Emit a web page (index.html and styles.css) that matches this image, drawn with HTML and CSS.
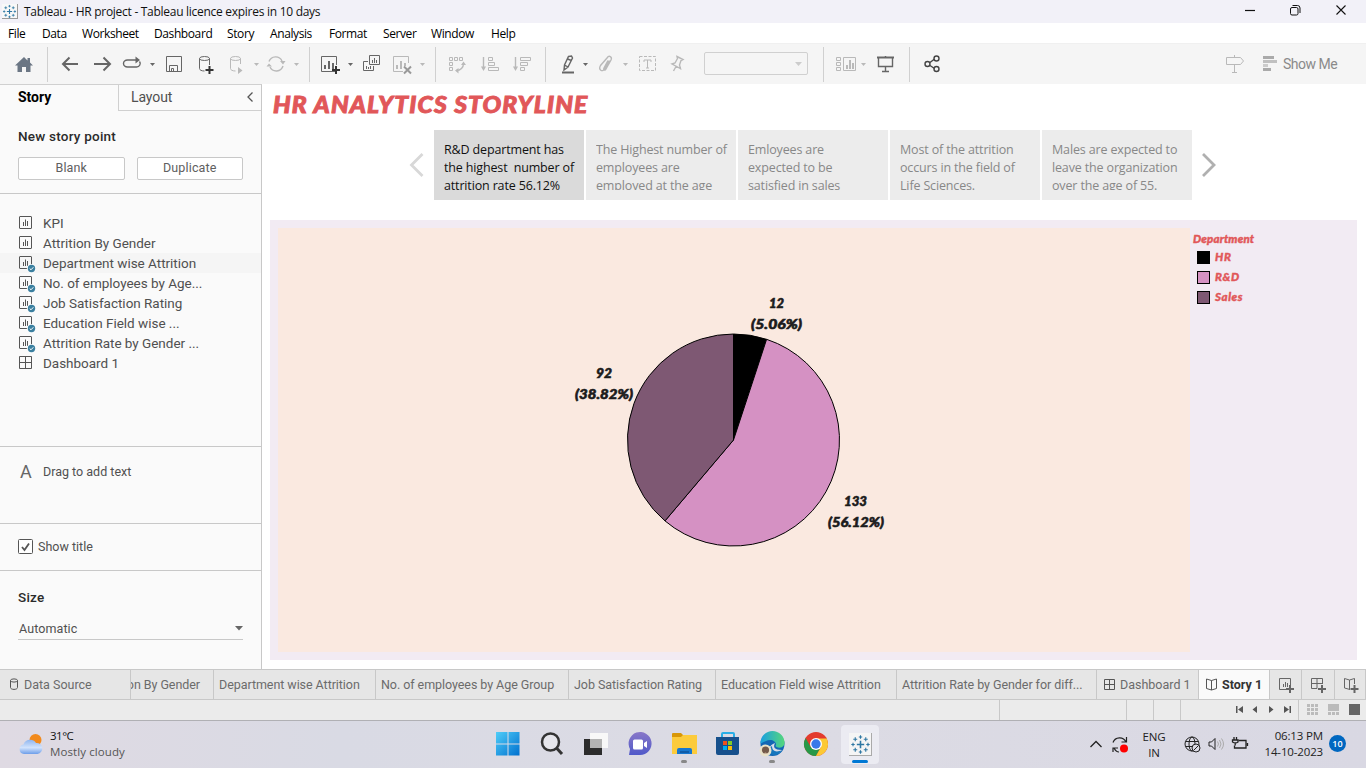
FILE: index.html
```html
<!DOCTYPE html>
<html lang="en">
<head>
<meta charset="utf-8">
<title>Tableau - HR project</title>
<link rel="stylesheet" href="styles.css">
</head>
<body>
<svg class="defs" width="0" height="0">
  <defs>
    <symbol id="caret" viewBox="0 0 8 20"><path d="M2 9h5l-2.500 3z" fill="currentColor"/></symbol>
    <symbol id="sheet" viewBox="0 0 18 18"><g fill="none" stroke="currentColor"><rect x="1.500" y="1.500" width="12" height="12" rx=".5"/><path d="M5.500 7v4M7.500 4.500V11M9.500 6v5"/></g></symbol>
    <symbol id="sheetok" viewBox="0 0 18 18"><use href="#sheet" width="18" height="18"/><circle cx="13.500" cy="13.500" r="4.600" fill="#fafafa"/><circle cx="13.500" cy="13.500" r="3.700" fill="#3a7f9f"/><path d="M11.700 13.500l1.300 1.300 2.300-2.500" fill="none" stroke="#fff"/></symbol>
    <symbol id="grid" viewBox="0 0 18 18"><path d="M1.500 1.500h12v12h-12zM7.500 1.500v12M1.500 7.500h12" fill="none" stroke="currentColor"/></symbol>
    <symbol id="tabgrid" viewBox="0 0 15 15"><path d="M1.500 1.500h10v10h-10zM6.500 1.500v10M1.500 6.500h10" fill="none" stroke="currentColor"/></symbol>
    <symbol id="tableau" viewBox="0 0 16 16"><g fill="none" stroke="#2f77a3"><path d="M8 5.200v5.600M5.200 8h5.600" stroke-width="1.200"/><path d="M4 2.500v3M2.500 4h3M12 2.500v3M10.500 4h3M4 10.500v3M2.500 12h3M12 10.500v3M10.500 12h3M8 1v2.600M6.700 2.300h2.600M8 12.400V15M6.700 13.700h2.600M2.300 6.700v2.600M1 8h2.600M13.700 6.700v2.600M12.400 8H15" stroke-width=".85"/></g></symbol>
  </defs>
</svg>

<header class="titlebar">
  <span class="app-icon"><svg width="15" height="15"><use href="#tableau"/></svg></span>
  <span class="app-title">Tableau - HR project - Tableau licence expires in 10 days</span>
  <svg class="window-controls" width="106" height="23" fill="none" stroke="#111">
    <path d="M1 10.500h10" stroke-width="1.200"/>
    <rect x="46.500" y="7.500" width="7.500" height="7.500" rx="1.500"/><path d="M48.500 5.500h5q2.500 0 2.500 2.500v5"/>
    <path d="M92.500 5.500l9 9M101.500 5.500l-9 9" stroke-width="1.100"/>
  </svg>
</header>

<nav class="menubar">
  <span>File</span><span>Data</span><span>Worksheet</span><span>Dashboard</span><span>Story</span><span>Analysis</span><span>Format</span><span>Server</span><span>Window</span><span>Help</span>
</nav>

<div class="toolbar">
  <svg class="ic" viewBox="0 0 20 20"><path d="M10 3L1 11.500h2.500V18H8v-5h4v5h4.500v-6.500H19L16 8.500V4h-2.500v2.500z" fill="#6b7684"/></svg>
  <i class="sep"></i>
  <svg class="ic" viewBox="0 0 20 20"><path d="M17 10H2M8.500 3.500L2 10l6.500 6.500" class="l2"/></svg>
  <svg class="ic" viewBox="0 0 20 20"><path d="M1 10h16M10.500 3.500L17 10l-6.500 6.500" class="l2"/></svg>
  <svg class="ic" viewBox="0 0 20 20"><path d="M9 6H5.500a4 3.500 0 0 0 0 7h9a4 3.500 0 0 0 3-5.500M9 6h6" class="l15"/><path d="M13.500 2.500v7L18 6z" fill="#666"/></svg>
  <svg class="caret"><use href="#caret"/></svg>
  <svg class="ic" viewBox="0 0 20 20"><path d="M1.500 2.500h15v15h-15zM4.500 17v-5.500h8V17M6.500 17v-2.500h2V17" class="l1"/></svg>
  <svg class="ic" viewBox="0 0 20 20"><path d="M2.500 4.500v10c0 1.500 2 2.500 5 2.500M12.500 4.500V11" class="l1"/><ellipse cx="7.500" cy="4.500" rx="5" ry="2" class="l1"/><path d="M12.500 12v8M8.500 16h8" class="plus"/></svg>
  <svg class="ic off" viewBox="0 0 20 20"><path d="M2.500 4.500v10c0 1.500 2 2.500 5 2.500M12.500 4.500V10" class="l1"/><ellipse cx="7.500" cy="4.500" rx="5" ry="2" class="l1"/><path d="M10 13v7l4.500-3.500z" fill="currentColor"/></svg>
  <svg class="caret off"><use href="#caret"/></svg>
  <svg class="ic off" viewBox="0 0 20 20"><path d="M3 7.500A7 7 0 0 1 16 7M17 12A7 7 0 0 1 4 13" class="l15"/><path d="M14 7h5.500L17 10.500zM.5 12.500H6L3 9.500z" fill="currentColor"/></svg>
  <svg class="caret off"><use href="#caret"/></svg>
  <i class="sep"></i>
  <svg class="ic" viewBox="0 0 20 20"><path d="M15 17.500H1.500v-15h15V11" class="l1"/><path d="M5 11v4M9 7v8M13 9v6" class="l2"/><path d="M16 12v8M12 16h8" class="plus"/></svg>
  <svg class="caret"><use href="#caret"/></svg>
  <svg class="ic" viewBox="0 0 20 20"><path d="M7.500 1.500h10v9h-10zM6 7.500H1.500v9h10V12" class="l1"/><path d="M10.500 6v3M12.500 4v5M14.500 6v3M4.500 12v3M6.500 13v2M8.500 12v3" class="l1"/></svg>
  <svg class="ic off" viewBox="0 0 20 20"><path d="M11 17.500H1.500v-15h15V9" class="l1"/><path d="M5 11v4M9 7v8M13 9v3" class="l2"/><path d="M12 12.500l7 7M19 12.500l-7 7" stroke="#999" stroke-width="2"/></svg>
  <svg class="caret off"><use href="#caret"/></svg>
  <i class="sep"></i>
  <svg class="ic off" viewBox="0 0 20 20"><path d="M1.500 3.500h3v3h-3zM6.500 3.500h3v3h-3zM11.500 3.500h3v3h-3zM1.500 8.500h3v3h-3zM1.500 13.500h3v3h-3z" class="l1"/><path d="M15.500 9.500c0 4-3 7-7 7" class="l15"/><path d="M13 11l2.500-3.500L18 11zM10.500 14L7 16.500l3.500 3z" fill="currentColor"/></svg>
  <svg class="ic off" viewBox="0 0 20 20"><path d="M3.500 3v12" class="l15"/><path d="M1 12.500h5L3.500 17z" fill="currentColor"/><path d="M8.500 3.500h4v3h-4zM8.500 8.500h6v3h-6zM8.500 13.500h10v3h-10z" class="l1"/></svg>
  <svg class="ic off" viewBox="0 0 20 20"><path d="M3.500 3v12" class="l15"/><path d="M1 12.500h5L3.500 17z" fill="currentColor"/><path d="M8.500 3.500h10v3h-10zM8.500 8.500h7v3h-7zM8.500 13.500h4v3h-4z" class="l1"/></svg>
  <i class="sep"></i>
  <svg class="ic" viewBox="0 0 20 20"><path d="M8.500 2.500l3-.5 1 2-4.500 9-4 3 .5-5zM4.500 11l3.500 2M7.500 5l4 1.500" class="l15"/><path d="M2 18.500h12" class="l2"/></svg>
  <svg class="caret"><use href="#caret"/></svg>
  <svg class="ic off" viewBox="0 0 20 20"><path d="M11 6.500l-4 7.500c-1 2 1 3 2 1l5-9c1.500-3.500-2-5-4-2L3.500 11.500c-2.500 4.500 2 7 4 3.500l5-8.500" class="l15"/></svg>
  <svg class="caret off"><use href="#caret"/></svg>
  <svg class="ic off" viewBox="0 0 20 20"><rect x="1.500" y="2.500" width="16" height="14" class="l1" stroke-dasharray="3 1.500"/><path d="M6 8V6h7v2M9.500 6v8M8 14h3" class="l1"/></svg>
  <svg class="ic off" viewBox="0 0 20 20"><path d="M7 2.500l6 3-2 1-1.500 4.500 1 3.500L2 10l3-1 2.500-4.500zM6 12.500L3.500 17" class="l15"/></svg>
  <div class="combo"><svg class="caret off"><path d="M0 8h7l-3.500 4z" fill="#ccc"/></svg></div>
  <i class="sep"></i>
  <svg class="ic wide off" viewBox="0 0 24 20"><path d="M1.500 3.500h4v3h-4zM1.500 8.500h4v3h-4zM1.500 13.500h4v3h-4zM8.500 3.500h12v13h-12z" class="l1"/><path d="M12 11v4M15 6v9M18 9v6" class="l2"/></svg>
  <svg class="caret off"><use href="#caret"/></svg>
  <svg class="ic" viewBox="0 0 20 20"><path d="M1 3.500h17" class="l2"/><path d="M9.500 2v1M2.500 4v8.500h14V4M9.500 12.500v5M6 17.500h7" class="l15"/></svg>
  <i class="sep"></i>
  <svg class="ic share" viewBox="0 0 20 20"><path d="M7 8.500L11.500 5M7 11.500l4.500 3" class="l15"/><circle cx="4.500" cy="10" r="2.500" class="l15"/><circle cx="13.500" cy="4.500" r="2.500" class="l15"/><circle cx="13.500" cy="15" r="2.500" class="l15"/></svg>
  <svg class="ic off" viewBox="0 0 20 20"><path d="M1.500 3.500h14l3 3.500-3 3.500h-14zM9.500 1v2.500M9.500 10.500v8M7 18.500h5" class="l1"/></svg>
  <div class="showme"><svg width="16" height="20"><path d="M1 2h11v3H1zM1 14h8v3H1z" fill="#aaa"/><path d="M1 6h14v3H1z" fill="#c0c0c0"/><path d="M1 10h5v3H1z" fill="#ccc"/></svg><span>Show Me</span></div>
</div>

<main class="workspace">
  <aside class="sidebar">
    <div class="pane-tabs"><div class="pane-tab active">Story</div><div class="pane-tab layout"><span>Layout</span><svg width="8" height="12"><path d="M6.500 1.500L2 6l4.500 4.500" fill="none" stroke="#555" stroke-width="1.300"/></svg></div></div>
    <section class="new-point">
      <h3>New story point</h3>
      <div class="buttons"><button>Blank</button><button>Duplicate</button></div>
    </section>
    <section class="sheets">
      <div class="row"><svg><use href="#sheet"/></svg><span>KPI</span></div>
      <div class="row"><svg><use href="#sheet"/></svg><span>Attrition By Gender</span></div>
      <div class="row hover"><svg><use href="#sheetok"/></svg><span>Department wise Attrition</span></div>
      <div class="row"><svg><use href="#sheetok"/></svg><span>No. of employees by Age...</span></div>
      <div class="row"><svg><use href="#sheetok"/></svg><span>Job Satisfaction Rating</span></div>
      <div class="row"><svg><use href="#sheetok"/></svg><span>Education Field wise ...</span></div>
      <div class="row"><svg><use href="#sheetok"/></svg><span>Attrition Rate by Gender ...</span></div>
      <div class="row"><svg><use href="#grid"/></svg><span>Dashboard 1</span></div>
    </section>
    <section class="drag"><b>A</b><span>Drag to add text</span></section>
    <section class="show-title"><svg width="15" height="15"><rect x=".5" y=".5" width="14" height="14" rx="1" fill="#fff" stroke="#555"/><path d="M4 8l2.500 3L11 4.500" fill="none" stroke="#555" stroke-width="1.800"/></svg><span>Show title</span></section>
    <section class="size"><h3>Size</h3><div class="select"><span>Automatic</span><svg width="8" height="5"><path d="M0 0h8L4 4.500z" fill="#666"/></svg></div></section>
  </aside>

  <div class="story">
    <h1><span>HR ANALYTICS STORYLINE</span></h1>
    <div class="navigator">
      <svg width="16" height="26"><path d="M13.500 2L2.500 13l11 11" fill="none" stroke="#d8d8d8" stroke-width="2.800"/></svg>
      <div class="points">
        <div class="point current"><p>R&amp;D department has<br>the highest&nbsp; number of<br>attrition rate 56.12%</p></div>
        <div class="point"><p>The Highest number of<br>employees are<br>employed at the age</p></div>
        <div class="point"><p>Emloyees are<br>expected to be<br>satisfied in sales</p></div>
        <div class="point"><p>Most of the attrition<br>occurs in the field of<br>Life Sciences.</p></div>
        <div class="point"><p>Males are expected to<br>leave the organization<br>over the age of 55.</p></div>
      </div>
      <svg width="16" height="26"><path d="M2 2l11 11L2 24" fill="none" stroke="#b0b0b0" stroke-width="2.800"/></svg>
    </div>
    <div class="viz">
      <svg class="pie" viewBox="278 228 912 424" width="912" height="424">
        <g stroke="#000" stroke-linejoin="round">
          <path d="M733.500 440V334A106 106 0 0 1 766.600 339.300Z" fill="#000"/>
          <path d="M733.500 440L766.600 339.300A106 106 0 1 1 665 520.900Z" fill="#d591c3"/>
          <path d="M733.500 440L665 520.900A106 106 0 0 1 733.500 334Z" fill="#7e5873"/>
        </g>
        <g class="mark">
          <text x="769" y="308" textLength="15" lengthAdjust="spacingAndGlyphs">12</text><text x="751" y="329" textLength="51" lengthAdjust="spacingAndGlyphs">(5.06%)</text>
          <text x="596" y="378" textLength="16" lengthAdjust="spacingAndGlyphs">92</text><text x="575" y="399" textLength="58" lengthAdjust="spacingAndGlyphs">(38.82%)</text>
          <text x="844" y="506" textLength="23" lengthAdjust="spacingAndGlyphs">133</text><text x="828" y="527" textLength="56" lengthAdjust="spacingAndGlyphs">(56.12%)</text>
        </g>
      </svg>
      <div class="legend">
        <div class="legend-title">Department</div>
        <div class="key"><i class="hr"></i>HR</div>
        <div class="key"><i class="rd"></i>R&amp;D</div>
        <div class="key"><i class="sales"></i>Sales</div>
      </div>
    </div>
  </div>
</main>

<nav class="tabs">
  <div class="tab source"><svg width="10" height="13" fill="none" stroke="#555"><path d="M1.500 2.500v7c0 2.500 7 2.500 7 0v-7"/><ellipse cx="5" cy="2.500" rx="3.500" ry="1.600"/></svg><span>Data Source</span></div>
  <div class="tab cut"><span>Attrition By Gender</span></div>
  <div class="tab"><span>Department wise Attrition</span></div>
  <div class="tab"><span>No. of employees by Age Group</span></div>
  <div class="tab"><span>Job Satisfaction Rating</span></div>
  <div class="tab"><span>Education Field wise Attrition</span></div>
  <div class="tab"><span>Attrition Rate by Gender for diff...</span></div>
  <div class="tab icon"><svg width="15" height="15"><use href="#tabgrid"/></svg><span>Dashboard 1</span></div>
  <div class="tab icon active"><svg width="15" height="14" fill="none" stroke="#555"><path d="M7.500 2.500L2.500 1v9.500l5 1.500 5-1.500V1zM7.500 2.500V12"/></svg><span>Story 1</span></div>
  <div class="tab add"><svg width="16" height="17" fill="none" stroke="#666"><path d="M7 11.500H.5v-11h11V7M4.500 6v3M6.500 4v5M8.500 5v4"/><path d="M11 7v8M7 11h8" stroke-width="2"/></svg></div>
  <div class="tab add"><svg width="16" height="17" fill="none" stroke="#666"><path d="M6 10.500H.5V.5h11V6M.5 5.500h11M6 .5v10"/><path d="M11 7v8M7 11h8" stroke-width="2"/></svg></div>
  <div class="tab add"><svg width="16" height="17" fill="none" stroke="#666"><path d="M6 11.500L.5 10V.5L5.500 2v9.500M5.500 2l5-1.500V6"/><path d="M10.500 7v8M6.500 11h8" stroke-width="2"/></svg></div>
</nav>

<div class="status">
  <i></i><i></i><i></i><i></i>
  <div class="pager"><svg width="56" height="9" fill="#555"><path d="M0 1h1.500v7H0zM7 1v7L2 4.500zM21 1v7l-4.500-3.500zM33 1v7l4.500-3.500zM48 1v7l5-3.500zM53.500 1H55v7h-1.500z"/></svg></div>
  <div class="views"><svg width="54" height="12"><path d="M0 0h3v3H0zM4 0h3v3H4zM8 0h3v3H8zM0 4h3v3H0zM4 4h3v3H4zM8 4h3v3H8zM0 8h3v3H0zM4 8h3v3H4zM8 8h3v3H8zM21 0h11v7H21zM21 8h3v3h-3zM25 8h3v3h-3zM29 8h3v3h-3z" fill="#bbb"/><path d="M42 0h11v11H42z" fill="#666"/></svg></div>
</div>

<footer class="taskbar">
  <div class="weather">
    <svg width="26" height="22"><defs><linearGradient id="cl" x2="0" y2="1"><stop stop-color="#8fb6ef"/><stop offset=".55" stop-color="#d2e3fc"/><stop offset="1" stop-color="#6d9ee9"/></linearGradient></defs><circle cx="16.500" cy="6" r="6" fill="#f28a1c"/><path d="M5 20a4.800 4.800 0 0 1-.5-9.500A7 7 0 0 1 17 9a5.500 5.500 0 0 1 1.500 11z" fill="url(#cl)"/></svg>
    <div><span class="temp">31°C</span><span>Mostly cloudy</span></div>
  </div>
  <div class="apps">
    <div class="app"><svg width="24" height="24"><defs><linearGradient id="win" x2="1" y2="1"><stop stop-color="#4fcdf8"/><stop offset="1" stop-color="#0070cf"/></linearGradient></defs><path d="M0 0h11.500v11.500H0zM12.500 0h11v11.500h-11zM0 12.500h11.500v11H0zM12.500 12.500h11v11h-11z" fill="url(#win)"/></svg></div>
    <div class="app"><svg width="24" height="24" fill="none" stroke="#333" stroke-width="2.500"><circle cx="10.500" cy="10" r="8.500" fill="#e6e6ec"/><path d="M16.500 16l5.500 6" stroke-width="3"/></svg></div>
    <div class="app"><svg width="24" height="24"><path d="M0 7h18v16H0z" fill="#2c2c2c"/><path d="M6 1h18v15H6z" fill="#f8f8f8"/><path d="M6 7h12v9H6z" fill="#b3b3b3"/></svg></div>
    <div class="app"><svg width="24" height="24"><defs><linearGradient id="chat" y1="0" x2="0" y2="1"><stop stop-color="#8978c8"/><stop offset="1" stop-color="#5059c9"/></linearGradient></defs><path d="M1 23l1-6A11.500 11.500 0 1 1 12 23z" fill="url(#chat)"/><rect x="5" y="7.500" width="10" height="10" rx="1.500" fill="#fff"/><path d="M16 11l3-2v7l-3-2z" fill="#fff"/></svg></div>
    <div class="app run"><svg width="25" height="24"><path d="M0 2q0-1 1-1h8l2 2v4H0z" fill="#d89708"/><path d="M0 5h9l2-2h14v19H0z" fill="#fccb3c"/><path d="M5 22v-4q0-2 2-2h11q2 0 2 2v4z" fill="#1777cf"/><path d="M8 19h9v2H8z" fill="#105ca8"/></svg></div>
    <div class="app"><svg width="24" height="24"><path d="M6 7V2q0-1 1-1h10q1 0 1 1v5" fill="none" stroke="#29aee6" stroke-width="2"/><path d="M0 5h23v16q0 2-2 2H2q-2 0-2-2z" fill="#17508c"/><path d="M7 9h4v4H7z" fill="#f1511b"/><path d="M12 9h4v4h-4z" fill="#80cc28"/><path d="M7 14h4v4H7z" fill="#00adef"/><path d="M12 14h4v4h-4z" fill="#fbbc09"/></svg></div>
    <div class="app run"><svg width="25" height="24"><defs><linearGradient id="edge"><stop stop-color="#1a9fe0"/><stop offset="1" stop-color="#55d77b"/></linearGradient></defs><circle cx="12.500" cy="12" r="12" fill="#1267b4"/><path d="M.5 11a12 12 0 0 1 24 0c0 5-7 6-9 3 2-3-2-6-5-6-6 0-10 5-10 3z" fill="url(#edge)"/><path d="M15 11c-2 4-1 7 7 7-2 3-6 5-10 3-4-3-3-8 3-10z" fill="#d9dce8"/><path d="M12 14c0 5 4 7 10 4-3 5-8 6-11 4-3-3-2-6 1-8z" fill="#1676bd"/><circle cx="5.500" cy="18.500" r="6" fill="#e8e2c9"/><circle cx="5.500" cy="18" r="3.600" fill="#735a4a"/><path d="M3 22q2.500-3 5 0z" fill="#c9b199"/></svg></div>
    <div class="app"><svg width="24" height="24"><circle cx="12" cy="12" r="12" fill="#e33b2e"/><path d="M1.600 6L7 15.500 12 17.500 17 14.500 12 24A12 12 0 0 1 1.600 6z" fill="#279847"/><path d="M12 6.500h10.700A12 12 0 0 1 12 24l5-9z" fill="#fcc934"/><circle cx="12" cy="12" r="6" fill="#fff"/><circle cx="12" cy="12" r="4.700" fill="#3978e8"/></svg></div>
    <div class="app current"><span><svg width="21" height="21"><use href="#tableau"/></svg></span></div>
  </div>
  <div class="tray">
    <svg class="up" width="12" height="8"><path d="M.5 7L6 1.500 11.500 7" fill="none" stroke="#222" stroke-width="1.300"/></svg>
    <svg class="sync" width="17" height="18" fill="none" stroke="#222" stroke-width="1.200"><path d="M1 6.500A7 7 0 0 1 14 6M14.500 1v5h-5M1 16v-4h5M2 12q2 4 5 4"/><circle cx="12" cy="12.500" r="4" fill="#f00" stroke="none"/></svg>
    <div class="lang">ENG<br>IN</div>
    <svg class="net" width="17" height="17" fill="none" stroke="#222"><circle cx="8" cy="8" r="7"/><ellipse cx="8" cy="8" rx="3" ry="7"/><path d="M1.500 5.500h13M1.500 10.500H9"/><circle cx="12" cy="12" r="4" fill="#dad9e3"/><path d="M9.500 14.500l5-5"/></svg>
    <svg class="vol" width="17" height="14" fill="none" stroke="#222"><path d="M1 5v4h2.500L7 12.500v-11L3.500 5z"/><path d="M9.500 4.500q2 2.500 0 5M11.500 3q3 4 0 8M13.500 1.500q4 5.500 0 11" stroke="#aaa"/></svg>
    <svg class="bat" width="17" height="14" fill="none" stroke="#222" stroke-width="1.300"><path d="M6.500 3.500H14v7.500H2.500V8.500M15.500 6v3"/><path d="M2 0v2.500M4.500 0v2.500M.5 3H6v2Q3.500 7 .5 5zM3.200 6v2.500"/></svg>
    <div class="clock">06:13 PM<br>14-10-2023</div>
    <div class="badge">10</div>
  </div>
</footer>
</body>
</html>
```
FILE: styles.css
```css
* { box-sizing: border-box; }
body { margin: 0; width: 1366px; height: 768px; overflow: hidden; display: flex; flex-direction: column; background: #fff; font-family: Roboto, "Liberation Sans", sans-serif; font-size: 13px; color: #505050; }
.defs { display: none; }
svg { display: block; flex: none; overflow: visible; }
span { white-space: nowrap; }
h1, h3, p { margin: 0; }

.titlebar { height: 23px; background: #f2f1f8; display: flex; align-items: flex-start; font: 12px/23px "Open Sans", sans-serif; color: #111; }
.app-icon { margin: 4px 0 0 2px; width: 16px; height: 15px; background: #f8f8f8; border-right: 1px solid #999; border-bottom: 1px solid #999; }
.app-title { margin-left: 6px; flex: 1; letter-spacing: -.28px; }
.window-controls { margin-right: 16px; }
.menubar { height: 20px; display: grid; grid-template-columns: 34px 40px 72px 73px 43px 59px 54px 48px 60px 60px; padding-left: 8px; font: 12px/21px "Open Sans", sans-serif; color: #000; letter-spacing: -.4px; }

.toolbar { height: 41px; background: #f5f5f5; border-top: 1px solid #f0f0f0; padding: 10px 0 0 14px; display: grid; grid-template-columns: 33px 14px 32px 29px 26px 17px 32px 31px 24px 14px 26px 17px 11px 26px 16px 30px 26px 17px 13px 32px 32px 33px 15px 21px 16px 24px 17px 32px 34px 119px 12px 24px 17px 33px 14px 302px 37px 104px; align-items: start; color: #666; }
.ic { width: 20px; height: 20px; }
.ic.wide { width: 24px; }
.caret { width: 8px; height: 20px; }
.off { color: #b9b9b9; }
.share { color: #444; }
.l1, .l15, .l2 { fill: none; stroke: currentColor; }
.l15 { stroke-width: 1.4; }
.l2 { stroke-width: 2; }
.plus { stroke: #333; stroke-width: 2; }
.sep { width: 1px; height: 35px; margin-top: -7px; background: #d0d0d0; }
.combo { width: 104px; height: 23px; margin-top: -2px; border: 1px solid #d0d0d0; border-radius: 2px; display: flex; justify-content: flex-end; padding: 1px 4px 0 0; }
.showme { display: flex; font-size: 14px; line-height: 20px; color: #8a8a8a; gap: 5px; letter-spacing: -.5px; }

.workspace { height: 585px; display: flex; }
.sidebar { width: 262px; background: #fafafa; border-right: 1px solid #c8c8c8; border-top: 1px solid #d0d0d0; display: flex; flex-direction: column; }
.pane-tabs { display: flex; height: 26px; font-size: 14px; line-height: 25px; }
.pane-tab.active { width: 118px; padding-left: 18px; font-weight: 700; color: #000; letter-spacing: -.05px; }
.pane-tab.layout { flex: 1; border-left: 1px solid #d0d0d0; border-bottom: 1px solid #d0d0d0; padding: 0 7px 0 12px; display: flex; justify-content: space-between; letter-spacing: -.1px; }
.layout svg { margin-top: 6px; }
.sidebar h3 { font-size: 13.5px; line-height: 18px; font-weight: 500; color: #2b2b2b; letter-spacing: .22px; }
.new-point { height: 83px; padding: 16px 18px 0; border-bottom: 1px solid #c8c8c8; }
.buttons { display: flex; gap: 12px; margin-top: 12px; }
button { width: 107px; height: 23px; border: 1px solid #c8c8c8; border-radius: 2px; background: #fff; font: 12.5px Roboto, sans-serif; color: #606060; letter-spacing: .15px; padding: 0 0 2px; }
.sheets { height: 253px; padding-top: 19px; border-bottom: 1px solid #c8c8c8; }
.row { height: 20px; display: flex; padding-left: 18px; line-height: 20px; font-size: 13.5px; gap: 7px; letter-spacing: -.02px; }
.row svg { width: 18px; height: 18px; margin-top: 2px; color: #555; }
.row.hover { background: #f5f5f5; }
.drag { height: 77px; border-bottom: 1px solid #c8c8c8; display: flex; padding: 15px 0 0 20px; line-height: 20px; font-size: 12.5px; }
.drag b { width: 23px; font-size: 18px; font-weight: 400; color: #666; }
.show-title { height: 47px; border-bottom: 1px solid #c8c8c8; display: flex; padding: 15px 0 0 18px; gap: 5px; line-height: 16px; font-size: 12.5px; }
.size { padding: 17px 18px 0; }
.select { height: 26px; margin-top: 8px; border-bottom: 1px solid #c8c8c8; display: flex; justify-content: space-between; align-items: center; padding: 4px 0 0 1px; font-size: 12.5px; letter-spacing: .1px; }

.story { flex: 1; padding: 0 9px 0 8px; display: flex; flex-direction: column; }
.story h1 { height: 46px; padding-left: 3px; font: italic 900 22px/42px Lato, sans-serif; color: #e15759; letter-spacing: 1px; -webkit-text-stroke: .9px #e15759; }
.story h1 span { display: inline-block; transform: scaleX(1.12); transform-origin: left; }
.navigator { display: flex; padding: 0 0 20px 139px; }
.navigator svg { margin-top: 22px; }
.points { display: flex; gap: 2px; margin: 0 9px; }
.point { width: 150px; height: 70px; background: #ececec; padding: 11px 0 10px 10px; color: #888; font: 12.5px/18px "Open Sans", sans-serif; letter-spacing: -.15px; }
.point p { height: 49px; overflow: hidden; white-space: nowrap; }
.point.current { background: #dadada; color: #111; }
.viz { height: 440px; background: #f2ebf3; display: flex; padding: 8px 0 0 8px; }
.pie { background: #fae9e0; }
.mark { font: italic 900 13px Lato, sans-serif; fill: #1b1b1b; stroke: #1b1b1b; stroke-width: .6px; }
.legend { padding: 4px 0 0 3px; font: italic 900 11.5px/14px Lato, sans-serif; color: #e15759; -webkit-text-stroke: .4px #e15759; }
.legend-title { height: 15px; letter-spacing: .15px; }
.key { height: 20px; display: flex; align-items: center; gap: 5px; padding-left: 4px; letter-spacing: .6px; }
.key i { width: 13px; height: 13px; border: 1px solid #000; }
.hr { background: #000; }
.rd { background: #d591c3; }
.sales { background: #7e5873; }

.tabs { height: 31px; background: #e6e6e6; border-top: 1px solid #c8c8c8; border-bottom: 1px solid #c8c8c8; display: grid; grid-template-columns: 131px 83px 162px 193px 147px 181px 200px 102px 71px 32px 33px 31px; font-size: 12.5px; color: #6b6b6b; line-height: 30px; letter-spacing: -.06px; }
.tab { border-right: 1px solid #c8c8c8; padding-left: 5px; overflow: hidden; display: flex; }
.tab.source { padding-left: 9px; gap: 5px; letter-spacing: 0; }
.source svg { margin-top: 8px; }
.cut { justify-content: flex-end; padding-right: 13px; }
.tab.icon { padding-left: 6px; gap: 2px; letter-spacing: 0; }
.icon svg { margin-top: 8px; color: #555; }
.tab.icon.active { padding-left: 5px; background: #fafafa; font-weight: 700; color: #333; gap: 3px; }
.tab.add { padding: 8px 0 0 9px; }
.status { height: 21px; background: #ebebeb; border-bottom: 1px solid #b0b0b4; display: grid; grid-template-columns: 1000px 127px 27px 27px 118px 67px; }
.status i { border-right: 1px solid #c8c8c8; }
.pager { padding: 5px 0 0 55px; border-right: 1px solid #c8c8c8; }
.views { padding: 4px 0 0 8px; }

.taskbar { height: 47px; background: linear-gradient(90deg, #dfdae3, #d9dae4 25%, #dcdbe4 60%, #d9d8e3); display: flex; font: 11.5px/16px "Open Sans", sans-serif; color: #222; }
.weather { width: 486px; padding: 7px 0 0 19px; display: flex; gap: 5px; }
.weather svg { margin-top: 6px; }
.weather span { display: block; color: #555; letter-spacing: .1px; }
.weather .temp { color: #111; letter-spacing: -.5px; }
.apps { display: flex; width: 396px; }
.app { width: 44px; height: 47px; display: flex; flex-direction: column; align-items: center; padding-top: 11px; }
.app.run::after { content: ""; width: 6px; height: 3px; border-radius: 2px; background: #888; margin-top: 4px; }
.app.current { width: 38px; height: 39px; margin: 4px 0 0 3px; border-radius: 4px; background: #ebebf2; padding-top: 8px; }
.app.current span { width: 23px; height: 23px; background: #f5f5f5; border-right: 1px solid #aaa; border-bottom: 1px solid #aaa; padding: 1px 0 0 1px; }
.app.current::after { content: ""; width: 16px; height: 3px; border-radius: 2px; background: #0078d4; margin-top: 4px; }
.tray { display: flex; align-items: flex-start; margin-left: 208px; }
.up { margin-top: 19px; }
.sync { margin: 15px 0 0 10px; }
.lang { width: 40px; text-align: center; margin: 8px 0 0 5px; letter-spacing: -.1px; }
.net { margin: 15px 0 0 10px; }
.vol { margin: 16px 0 0 7px; }
.bat { margin: 16px 0 0 7px; }
.clock { width: 76px; text-align: right; margin: 7px 0 0 -2px; letter-spacing: -.15px; white-space: nowrap; }
.badge { width: 17px; height: 17px; border-radius: 50%; margin: 14px 0 0 6px; background: #0067c0; color: #fff; text-align: center; font-size: 9px; line-height: 17px; font-weight: 600; }
```
